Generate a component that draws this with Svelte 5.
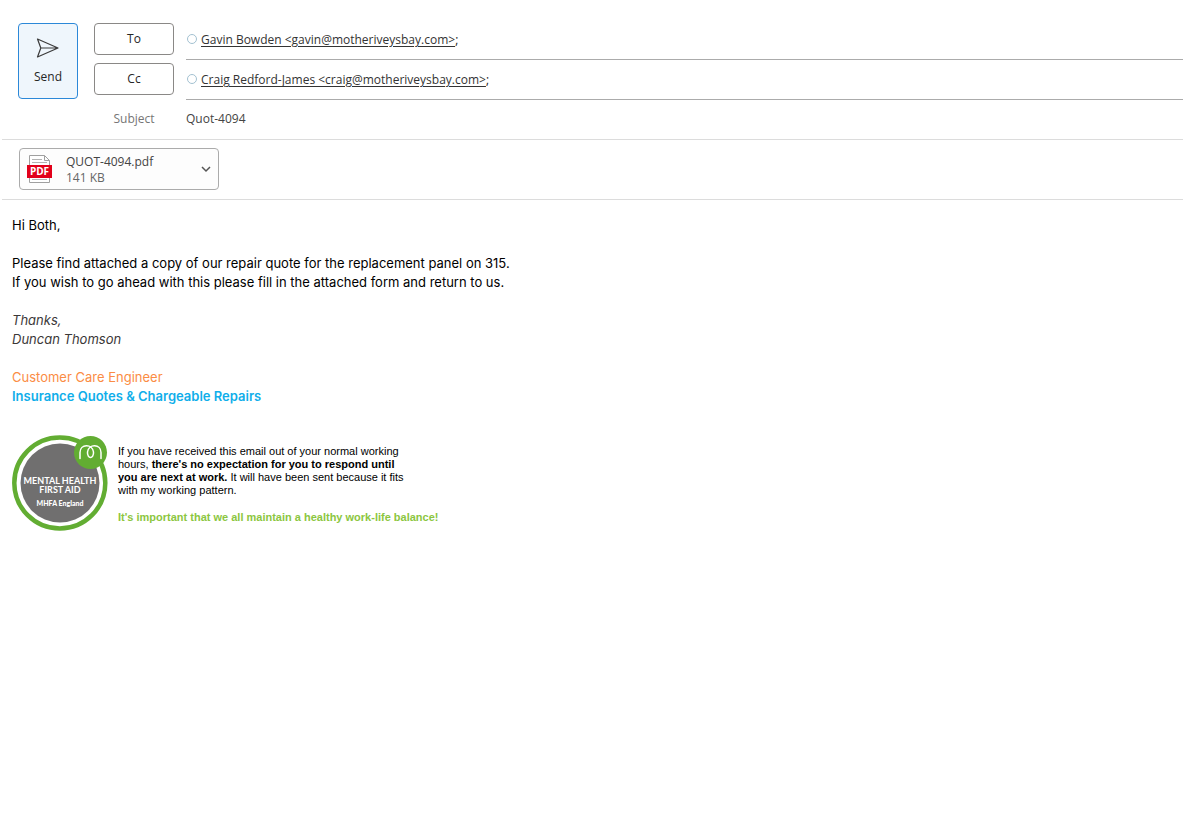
<script lang="ts">
  const recipients = [
    { kind: 'To', name: 'Gavin Bowden', email: 'gavin@motheriveysbay.com' },
    { kind: 'Cc', name: 'Craig Redford-James', email: 'craig@motheriveysbay.com' },
  ]

  const attachment = { name: 'QUOT-4094.pdf', size: '141 KB' }

  let subject = $state('Quot-4094')
</script>

<main>
  <header>
    <button class="send">
      <svg width="24" height="22" viewBox="0 0 24 22" aria-hidden="true">
        <path d="M1.500 2 L22 11 L1.500 20 L4.800 11 Z M4.800 11 H22" />
      </svg>
      <span>Send</span>
    </button>

    <div class="fields">
      {#each recipients as person (person.kind)}
        <div class="field">
          <button class="kind">{person.kind}</button>
          <div class="recipient">
            <span class="presence"></span>
            <a href="mailto:{person.email}">{person.name} &lt;{person.email}&gt;</a><span>;</span>
          </div>
        </div>
      {/each}

      <div class="field subject">
        <label for="subject">Subject</label>
        <input id="subject" type="text" bind:value={subject} />
      </div>
    </div>
  </header>

  <section class="attachments" aria-label="Attachments">
    <button class="attachment">
      <svg width="26" height="30" viewBox="0 0 26 30" aria-hidden="true">
        <path class="page" d="M2.500 1.500 H17.500 L22.500 6.500 V28.500 H2.500 Z M17.500 1.500 V6.500 H22.500" />
        <path class="lines" d="M5 5.500 H15 M5 8.500 H20 M5 25.500 H20" />
        <rect x="0" y="11" width="25" height="13" fill="#e2001a" />
        <text x="12.500" y="21" text-anchor="middle">PDF</text>
      </svg>
      <span class="file">
        <span>{attachment.name}</span>
        <span class="size">{attachment.size}</span>
      </span>
      <svg class="chevron" width="12" height="8" viewBox="0 0 12 8" aria-hidden="true">
        <path d="M2 2 L6 6 L10 2" />
      </svg>
    </button>
  </section>

  <article>
    <p>Hi Both,</p>
    <p>
      Please find attached a copy of our repair quote for the replacement panel on 315.<br />
      If you wish to go ahead with this please fill in the attached form and return to us.
    </p>
    <p class="sender">Thanks,<br />Duncan Thomson</p>
    <p class="role">
      Customer Care Engineer<br />
      <strong>Insurance Quotes &amp; Chargeable Repairs</strong>
    </p>

    <footer>
      <svg width="96" height="97" viewBox="0 0 96 97" role="img" aria-label="Mental Health First Aid">
        <circle cx="47.800" cy="49" r="45.500" fill="#fff" stroke="#62ad32" stroke-width="4.500" />
        <circle cx="48" cy="49" r="39.500" fill="#706f6f" />
        <circle cx="78.500" cy="18.500" r="16.500" fill="#62ad32" />
        <path
          class="mark"
          d="M68 24.500 V18.500 C68 9.500 80.500 9.500 81.500 18 C81.800 21.500 80 23.500 78.500 23.500 C77 23.500 75.200 21.500 75.500 18 C76.500 9.500 89 9.500 89 18.500 V24.500"
        />
        <text x="48" y="50" text-anchor="middle" font-size="9">MENTAL HEALTH</text>
        <text x="48" y="59" text-anchor="middle" font-size="9">FIRST AID</text>
        <text class="org" x="48" y="72" text-anchor="middle" font-size="7">MHFA England</text>
      </svg>

      <div class="note">
        <p>
          If you have received this email out of your normal working<br />
          hours, <b>there's no expectation for you to respond until<br />
          you are next at work.</b> It will have been sent because it fits<br />
          with my working pattern.
        </p>
        <p class="balance">It's important that we all maintain a healthy work-life balance!</p>
      </div>
    </footer>
  </article>
</main>

<style>
  :global(body) {
    margin: 0;
    background: #fff;
  }

  main {
    color: #262626;
    font: 12px/16px 'Segoe UI', 'Open Sans', sans-serif;
  }

  button,
  input {
    font: inherit;
    color: inherit;
  }

  header {
    display: flex;
    align-items: flex-start;
    gap: 16px;
    margin-left: 2px;
    padding: 23px 0 4px 16px;
    border-bottom: 1px solid #dcdcdc;
  }

  .send {
    display: flex;
    flex-direction: column;
    align-items: center;
    gap: 10px;
    width: 60px;
    height: 76px;
    padding: 13px 0 0;
    border: 1px solid #2b88d8;
    border-radius: 4px;
    background: #eff6fc;
  }

  .send svg {
    fill: none;
    stroke: #3b3b3b;
    stroke-width: 1.2;
    stroke-linejoin: round;
  }

  .fields {
    flex: 1;
    min-width: 0;
  }

  .field {
    display: flex;
    align-items: flex-start;
    gap: 12px;
    height: 40px;
  }

  .kind {
    width: 80px;
    height: 32px;
    padding: 0;
    border: 1px solid #8a8886;
    border-radius: 4px;
    background: #fff;
  }

  .recipient {
    display: flex;
    align-items: center;
    flex: 1;
    height: 34px;
    padding: 0 0 2px 1px;
    border-bottom: 1px solid #ababab;
  }

  .presence {
    width: 8px;
    height: 8px;
    margin: 0 4px 2px 0;
    border: 1px solid #a3c1d1;
    border-radius: 50%;
  }

  a {
    color: #333;
    text-decoration: underline;
    text-underline-offset: 2px;
  }

  .subject {
    align-items: center;
    height: 32px;
  }

  .subject label {
    width: 80px;
    color: #767676;
    text-align: center;
  }

  .subject input {
    flex: 1;
    padding: 0;
    border: none;
    outline: none;
    color: #444;
  }

  .attachments {
    margin-left: 2px;
    padding: 8px 17px 9px;
    border-bottom: 1px solid #dcdcdc;
  }

  .attachment {
    display: flex;
    align-items: center;
    width: 200px;
    height: 42px;
    padding: 0 6px 0 7px;
    border: 1px solid #ababab;
    border-radius: 4px;
    background: #fdfdfd;
    text-align: left;
  }

  .page {
    fill: #fff;
    stroke: #a0a0a0;
  }

  .lines {
    stroke: #b4b4b4;
  }

  .attachment text {
    fill: #fff;
    font: 700 10px 'Open Sans', sans-serif;
  }

  .file {
    display: flex;
    flex: 1;
    flex-direction: column;
    margin-left: 13px;
    padding-top: 2px;
    color: #444;
  }

  .size {
    color: #666;
  }

  .chevron {
    fill: none;
    stroke: #555;
    stroke-width: 1.5;
  }

  article {
    padding: 16px 12px;
    color: #000;
    font: 13px/19px Aptos, Inter, sans-serif;
  }

  p {
    margin: 0 0 19px;
  }

  .sender {
    color: #3b3838;
    font-style: italic;
  }

  .role {
    color: #fb8c44;
  }

  .role strong {
    color: #10aeea;
    font-weight: 600;
  }

  footer {
    display: flex;
    gap: 10px;
    padding-top: 9px;
  }

  footer text {
    fill: #fff;
    font-family: Lato, sans-serif;
    font-weight: 700;
  }

  footer .org {
    font-weight: 900;
  }

  .mark {
    fill: none;
    stroke: #fff;
    stroke-width: 1.5;
    stroke-linecap: round;
  }

  .note {
    padding-top: 11px;
    font: 11px/13px 'Liberation Sans', Arial, sans-serif;
  }

  .note p {
    margin-bottom: 14px;
  }

  .note .balance {
    margin: 0;
    color: #8cc63f;
    font-weight: 700;
  }
</style>
